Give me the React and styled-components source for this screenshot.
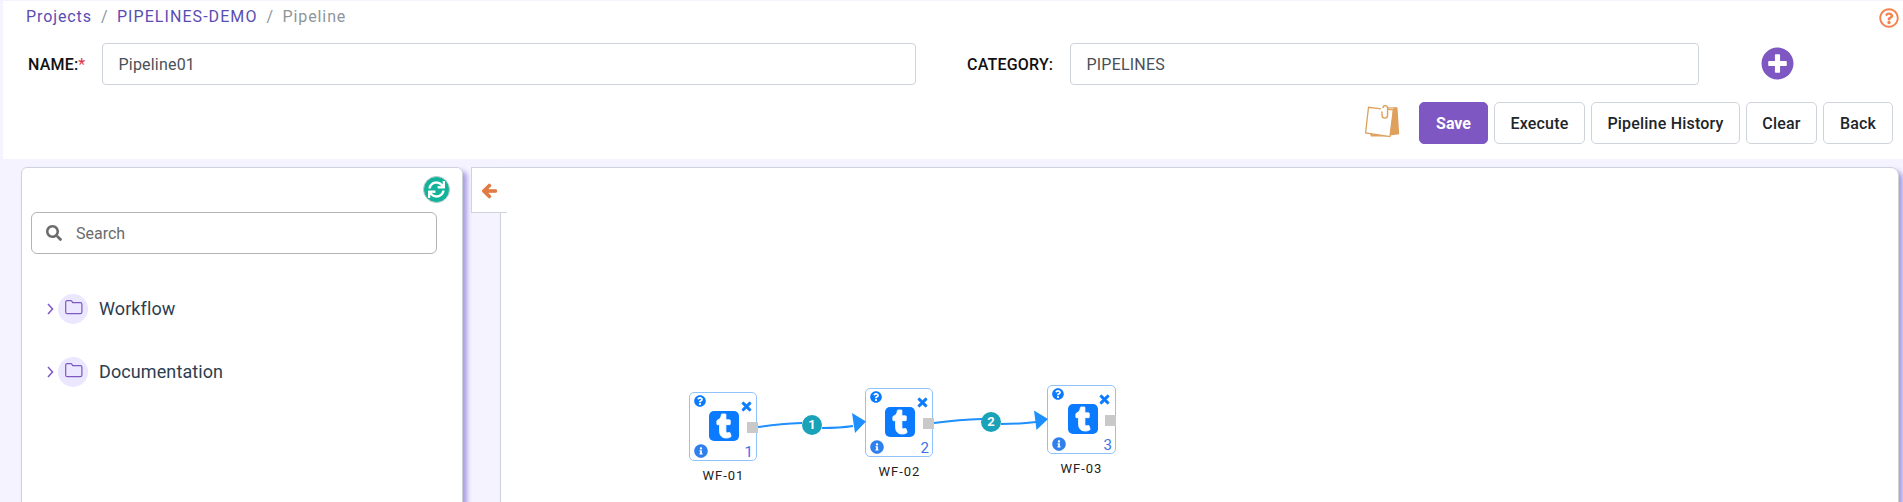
import React from "react";
import styled, { createGlobalStyle } from "styled-components";
import {
  FaPlusCircle, FaRegQuestionCircle, FaSearch, FaSync, FaArrowLeft,
  FaTumblr, FaTimes, FaInfoCircle, FaQuestionCircle,
} from "react-icons/fa";

const GlobalStyle = createGlobalStyle`
  * { box-sizing: border-box; }
  body { margin: 0; background: #f5f3ff; font-family: Roboto, "Liberation Sans", sans-serif; font-size: 16px; overflow: hidden; }
  svg { display: block; flex: none; }
`;

const Page = styled.div`
  height: 502px;
  display: flex;
  flex-direction: column;
  overflow: hidden;
`;

const Header = styled.header`
  margin: 1px 0 0 3px;
  height: 158px;
  background: #fff;
  flex: none;
`;

const TopLine = styled.div`
  display: flex;
  justify-content: space-between;
  height: 42px;
  padding: 6px 4px 0 23px;
`;

const Breadcrumb = styled.nav`
  display: flex;
  height: 19px;
  line-height: 19px;
  letter-spacing: 0.9px;
  color: #8e959b;
`;

const Crumb = styled.a`
  color: #5a4db2;
  letter-spacing: ${(p) => (p.$wide ? 1.07 : 0.9)}px;
`;

const Slash = styled.span`
  padding: 0 8.5px 0 9px;
`;

const HelpIcon = styled(FaRegQuestionCircle)`
  width: 20px;
  height: 20px;
  margin-top: 1px;
  color: #f5824a;
`;

const FormRow = styled.div`
  display: flex;
  align-items: center;
  height: 42px;
  padding-left: 25px;
`;

const Label = styled.label`
  width: ${(p) => p.$width}px;
  padding-top: 1px;
  font-weight: 500;
  line-height: 20px;
  letter-spacing: 0.2px;
  color: #111;
`;

const Required = styled.span`
  color: #dc3545;
  font-weight: 400;
`;

const Input = styled.input`
  width: ${(p) => p.$width}px;
  height: 42px;
  margin-right: ${(p) => p.$gap}px;
  padding: 0 15.5px;
  border: 1px solid #ced4da;
  border-radius: 4px;
  background: #fff;
  color: #495057;
  font: 400 16px Roboto, sans-serif;
  letter-spacing: 0.2px;
`;

const AddIcon = styled(FaPlusCircle)`
  width: 33px;
  height: 33px;
  margin-bottom: 1px;
  color: #7e57c2;
`;

const Actions = styled.div`
  display: flex;
  justify-content: flex-end;
  gap: 6px;
  padding: 17px 10px 0 0;
`;

const NotesIcon = styled.svg`
  width: 36px;
  height: 34px;
  margin: 2px 13px 0 0;
`;

const Button = styled.button`
  width: ${(p) => p.$width}px;
  height: 42px;
  padding: 0;
  border: 1px solid ${(p) => (p.$primary ? "#7e57c2" : "#ced4da")};
  border-radius: 5px;
  background: ${(p) => (p.$primary ? "#7e57c2" : "#fff")};
  color: ${(p) => (p.$primary ? "#fff" : "#212529")};
  font: ${(p) => (p.$primary ? 700 : 500)} 16px Roboto, sans-serif;
  letter-spacing: ${(p) => (p.$primary ? 0 : 0.2)}px;
  white-space: nowrap;
`;

const Main = styled.main`
  display: flex;
  flex: 1;
  padding: 8px 4px 0 21px;
`;

const Sidebar = styled.aside`
  width: 442px;
  height: 360px;
  margin-right: 8px;
  padding: 8px 11px 0 9px;
  border: 1px solid #ced4da;
  border-radius: 6px;
  background: #fff;
  box-shadow: 4px 4px 5px #a59be0;
`;

const Refresh = styled.button`
  display: flex;
  align-items: center;
  justify-content: center;
  width: 27px;
  height: 27px;
  margin: 0 1px 9px auto;
  padding: 0;
  border: 1px solid #b9cdc9;
  border-radius: 50%;
  background: #12b39b;
  color: #fff;
`;

const SearchBox = styled.div`
  display: flex;
  align-items: center;
  gap: 14px;
  width: 406px;
  height: 42px;
  padding-left: 14px;
  border: 1px solid #b4b4b4;
  border-radius: 6px;
  color: #6b6b6b;
`;

const Tree = styled.div`
  display: flex;
  flex-direction: column;
  gap: 33px;
  padding: 40px 0 0 16px;
`;

const TreeItem = styled.div`
  display: flex;
  align-items: center;
  height: 30px;
  font-size: 18px;
  color: #2c3e50;
`;

const TreeLabel = styled.span`
  padding-bottom: 2px;
  letter-spacing: 0.1px;
`;

const FolderBadge = styled.span`
  width: 30px;
  height: 30px;
  margin: 0 11px 0 4px;
  padding: 6px 0 0 6.5px;
  border-radius: 50%;
  background: #ebe7ff;
`;

const CollapseTab = styled.button`
  z-index: 1;
  width: 36px;
  height: 46px;
  margin-right: -7px;
  padding: 1px 0 0 10px;
  border: 1px solid #ced4da;
  border-right: 0;
  background: #fff;
  color: #e17b43;
`;

const BackArrow = styled(FaArrowLeft)`
  width: 15px;
  height: 16px;
  stroke: currentColor;
  stroke-width: 36px;
  overflow: visible;
`;

const Canvas = styled.section`
  position: relative;
  flex: 1;
  height: 360px;
  border: 1px solid #ced4da;
  border-radius: 0 8px 0 0;
  background: #fff;
  box-shadow: 4px 4px 5px #a59be0;
`;

const Links = styled.svg`
  position: absolute;
  left: -1px;
  top: -1px;
`;

const Node = styled.div`
  position: absolute;
  left: ${(p) => p.$x}px;
  top: ${(p) => p.$y}px;
  width: ${(p) => p.$width}px;
  height: 69px;
  border: 1px solid #90c3fb;
  border-radius: 5px;
  background: #fff;
  color: #0a7bff;
`;

const Spot = styled.span`
  position: absolute;
  left: ${(p) => p.$x}px;
  top: ${(p) => p.$y}px;
  color: ${(p) => p.$color || "inherit"};
`;

const Brand = styled.span`
  position: absolute;
  left: 50%;
  top: 18px;
  display: flex;
  align-items: center;
  justify-content: center;
  width: 30px;
  height: 30px;
  margin-left: -14px;
  border-radius: 5px;
  background: #0a7bff;
  color: #fff;
`;

const BrandGlyph = styled(FaTumblr)`
  width: 24px;
  height: 24px;
  stroke: currentColor;
  stroke-width: 18px;
  overflow: visible;
`;

const CloseIcon = styled(FaTimes)`
  width: 13px;
  height: 13px;
  stroke: currentColor;
  stroke-width: 32px;
`;

const Port = styled.span`
  position: absolute;
  left: 57px;
  top: 29px;
  width: 11px;
  height: 11px;
  background: #c9c9c9;
`;

const Order = styled.span`
  position: absolute;
  right: 3px;
  bottom: 0;
  font-size: 15px;
  line-height: 16px;
  color: #3b72e8;
`;

const Caption = styled.span`
  position: absolute;
  left: 12.5px;
  top: 75px;
  font-size: 13px;
  line-height: 16px;
  letter-spacing: 1px;
  white-space: nowrap;
  color: #222;
`;

const Step = styled.span`
  position: absolute;
  left: ${(p) => p.$x}px;
  top: ${(p) => p.$y}px;
  width: 20px;
  height: 20px;
  border-radius: 50%;
  background: #1aa2b8;
  color: #fff;
  font-size: 13px;
  font-weight: 700;
  line-height: 20px;
  text-align: center;
`;

const nodes = [
  { name: "WF-01", x: 188, y: 224, width: 68 },
  { name: "WF-02", x: 364, y: 220, width: 68 },
  { name: "WF-03", x: 546, y: 217, width: 69 },
];

function Folder({ name }) {
  return (
    <TreeItem>
      <svg width="7" height="12" viewBox="0 0 7 12" fill="none" stroke="#7e57c2" strokeWidth="1.5">
        <path d="M1 1l4.500 5L1 11" />
      </svg>
      <FolderBadge>
        <svg width="18" height="16" viewBox="0 0 18 16" fill="none" stroke="#7e57c2" strokeWidth="1.2">
          <path d="M.7 2.200Q.7.7 2.200.7h3.600q.7 0 1.100.6l.8 1.300h7.600q1.600 0 1.600 1.600v7.800q0 1.600-1.600 1.600H2.200q-1.500 0-1.500-1.600z" />
        </svg>
      </FolderBadge>
      <TreeLabel>{name}</TreeLabel>
    </TreeItem>
  );
}

function WorkflowNode({ name, x, y, width, order }) {
  return (
    <Node $x={x} $y={y} $width={width}>
      <Spot $x={4} $y={2}><FaQuestionCircle size={12} /></Spot>
      <Spot $x={50} $y={7}><CloseIcon /></Spot>
      <Brand><BrandGlyph /></Brand>
      <Spot $x={4} $y={51} $color="#2f80ed"><FaInfoCircle size={14} /></Spot>
      <Port />
      <Order>{order}</Order>
      <Caption>{name}</Caption>
    </Node>
  );
}

export default function App() {
  return (
    <Page>
      <GlobalStyle />
      <Header>
        <TopLine>
          <Breadcrumb>
            <Crumb>Projects</Crumb><Slash>/</Slash>
            <Crumb $wide>PIPELINES-DEMO</Crumb><Slash>/</Slash>
            <span>Pipeline</span>
          </Breadcrumb>
          <HelpIcon />
        </TopLine>
        <FormRow>
          <Label $width={74}>NAME:<Required>*</Required></Label>
          <Input $width={814} $gap={51} defaultValue="Pipeline01" />
          <Label $width={103}>CATEGORY:</Label>
          <Input $width={629} $gap={62} defaultValue="PIPELINES" />
          <AddIcon />
        </FormRow>
        <Actions>
          <NotesIcon viewBox="0 0 36 34" fill="none" stroke="#dea05c">
            <path d="M29.500 3.700L33.500 3.500 35.200 30.300 26 31.500zM6 30l20 2.500-19 0z" fill="#dea05c" stroke="none" />
            <path d="M17 4.800L4.500 3.300 1.600 29 26 32.600 29.300 5.800 24 5.300" strokeWidth="1.300" />
            <path d="M24 3.900h9" strokeWidth="1.200" />
            <path d="M18 7.500v3.800c0 3.800 5.600 3.800 5.600 0V4.500c0-3.800-4.600-3.800-4.600-.6" strokeWidth="1.400" />
          </NotesIcon>
          <Button $primary $width={69}>Save</Button>
          <Button $width={91}>Execute</Button>
          <Button $width={149}>Pipeline History</Button>
          <Button $width={71}>Clear</Button>
          <Button $width={70}>Back</Button>
        </Actions>
      </Header>
      <Main>
        <Sidebar>
          <Refresh><FaSync size={17} /></Refresh>
          <SearchBox><FaSearch size={16} />Search</SearchBox>
          <Tree>
            <Folder name="Workflow" />
            <Folder name="Documentation" />
          </Tree>
        </Sidebar>
        <CollapseTab><BackArrow /></CollapseTab>
        <Canvas>
          {nodes.map((n, i) => <WorkflowNode key={n.name} {...n} order={i + 1} />)}
          <Links width="700" height="330" fill="none" stroke="#1e8fff" strokeWidth="2">
            <path d="M258 260Q278 257 302 256M322 261Q340 261 353 259" />
            <path d="M434 256Q460 252.500 482 252M501 257Q520 257 536 255" />
            <path d="M352 246l14 8.500-11 11.500zM534 243.500l14 8.500-11.500 11z" fill="#1e8fff" stroke="none" />
          </Links>
          <Step $x={301} $y={247}>1</Step>
          <Step $x={480} $y={244}>2</Step>
        </Canvas>
      </Main>
    </Page>
  );
}
